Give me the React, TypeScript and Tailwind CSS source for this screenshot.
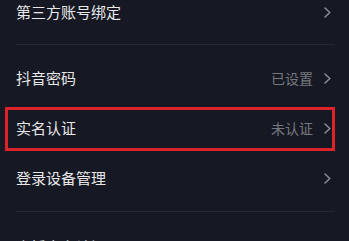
import React from 'react';

interface Item {
  title: string;
  value?: string;
  highlight?: boolean;
}

const groups: Item[][] = [
  [{ title: '第三方账号绑定' }],
  [
    { title: '抖音密码', value: '已设置' },
    { title: '实名认证', value: '未认证', highlight: true },
    { title: '登录设备管理' },
  ],
  [{ title: '直播实名认证' }],
];

const Chevron = () => (
  <svg width="7" height="11" viewBox="0 0 7 11" fill="none">
    <polyline points="1,1 5.8,5.5 1,10" stroke="#8b8d95" strokeWidth="1.5" strokeLinecap="round" strokeLinejoin="round" />
  </svg>
);

function Row({ item }: { item: Item }) {
  return (
    <div className="relative flex h-[50px] items-center justify-between pl-4 pr-[18px]">
      <span className="text-[15px] text-[#e8e8ea]">{item.title}</span>
      <div className="flex items-center gap-[11px]">
        {item.value && <span className="text-[14px] text-[#76787f]">{item.value}</span>}
        <Chevron />
      </div>
      {/* highlight box drawn over the row */}
      {item.highlight && (
        <div className="pointer-events-none absolute left-[5px] right-[14px] top-[4px] bottom-[2px] border-[3px] border-[#dc2329]" />
      )}
    </div>
  );
}

export default function App() {
  return (
    <div
      className="h-[241px] w-[349px] overflow-hidden bg-[#161823]"
      style={{ fontFamily: '"Noto Sans CJK SC", "Noto Sans", sans-serif' }}
    >
      <div className="-mt-[13px]">
        {groups.map((group, gi) => (
          <div key={gi}>
            {gi > 0 && (
              <div className={gi === 1 ? 'h-[16px] pt-[7px]' : 'h-[19px] pt-[8px]'}>
                <div className="ml-4 mr-[14px] h-px bg-[#262833]" />
              </div>
            )}
            {group.map((item) => (
              <Row key={item.title} item={item} />
            ))}
          </div>
        ))}
      </div>
    </div>
  );
}
